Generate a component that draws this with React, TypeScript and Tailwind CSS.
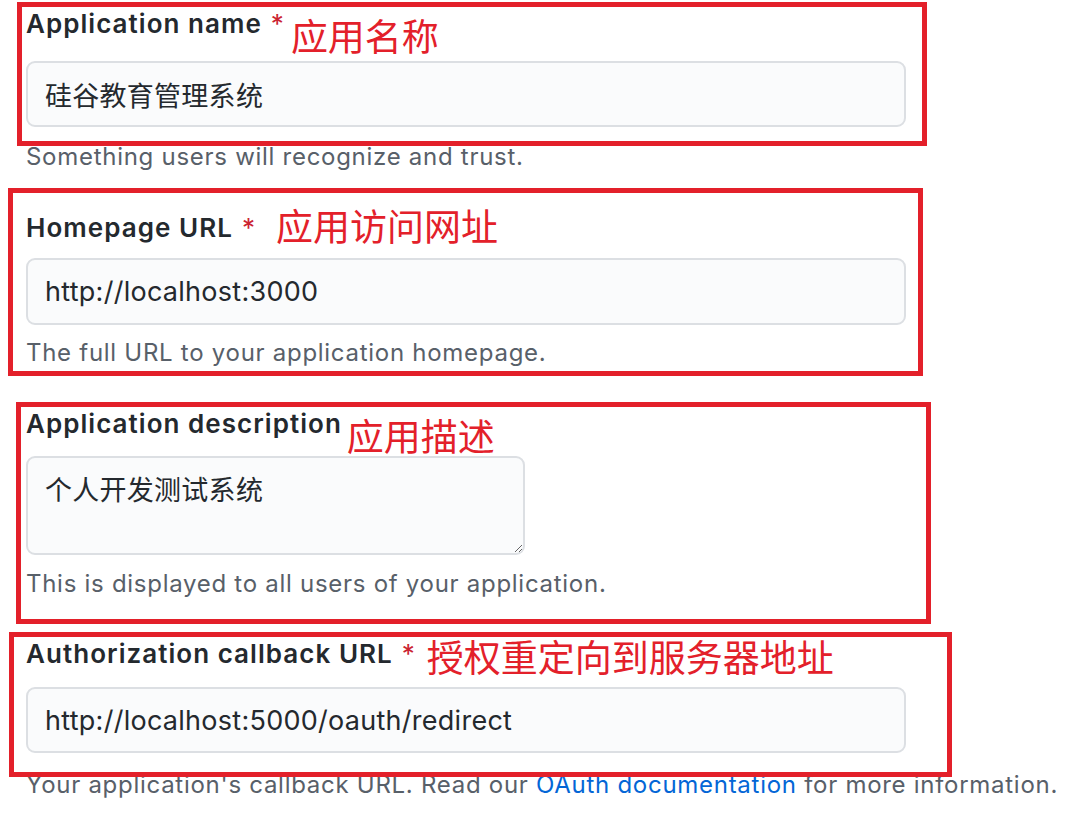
const labelCls = "text-[26px] leading-[30px] font-semibold tracking-[0.04em] whitespace-nowrap";
const noteCls = "leading-none text-[37px] text-[#e3202a] font-['Noto_Sans_CJK_SC',sans-serif] whitespace-nowrap";
const fieldCls =
  "block w-[880px] rounded-[9px] border-2 border-[#dcdfe3] bg-[#fafbfc] px-[17px] text-[27px] tracking-[0.01em] text-[#24292e] outline-none";
const helpCls = "text-[24px] leading-[30px] tracking-[0.03em] text-[#586069] whitespace-nowrap";

function Star() {
  return <span className="ml-[9px] text-[26px] leading-[30px] text-[#cb2431]">*</span>;
}

export default function App() {
  return (
    <div className="relative min-h-screen w-full bg-white font-[Inter,'Noto_Sans_CJK_SC',sans-serif] text-[#24292e]">
      <div className="flex flex-col pl-[26px] pt-[9px]">
        {/* Application name */}
        <div className="flex h-[30px] items-start">
          <label className={labelCls}>Application name</label>
          <Star />
          <span className={`${noteCls} ml-[7px] mt-[8px]`}>应用名称</span>
        </div>
        <input readOnly value="硅谷教育管理系统" className={`${fieldCls} mt-[22px] h-[66px]`} />
        <p className={`${helpCls} mt-[15px]`}>Something users will recognize and trust.</p>

        {/* Homepage URL */}
        <div className="mt-[41px] flex h-[30px] items-start">
          <label className={labelCls}>Homepage URL</label>
          <Star />
          <span className={`${noteCls} ml-[21px] -mt-[6px]`}>应用访问网址</span>
        </div>
        <input readOnly value="http://localhost:3000" className={`${fieldCls} mt-[15px] h-[67px]`} />
        <p className={`${helpCls} mt-[13px]`}>The full URL to your application homepage.</p>

        {/* Application description */}
        <div className="mt-[41px] flex h-[30px] items-start">
          <label className={labelCls}>Application description</label>
          <span className={`${noteCls} ml-[5px] mt-[8px]`}>应用描述</span>
        </div>
        <textarea
          readOnly
          value="个人开发测试系统"
          className="mt-[17px] block h-[99px] w-[499px] resize rounded-[9px] border-2 border-[#dcdfe3] bg-[#fafbfc] px-[17px] pt-[14px] text-[27px] leading-[38px] tracking-[0.01em] text-[#24292e] outline-none"
        />
        <p className={`${helpCls} mt-[14px]`}>This is displayed to all users of your application.</p>

        {/* Authorization callback URL */}
        <div className="mt-[40px] flex h-[30px] items-start">
          <label className={labelCls}>Authorization callback URL</label>
          <Star />
          <span className={`${noteCls} ml-[12px] -mt-[1px]`}>授权重定向到服务器地址</span>
        </div>
        <input readOnly value="http://localhost:5000/oauth/redirect" className={`${fieldCls} mt-[18px] h-[66px]`} />
        <p className={`${helpCls} mt-[17px]`}>
          Your application's callback URL. Read our <a className="text-[#0366d6]">OAuth documentation</a> for more information.
        </p>
      </div>

      {/* red annotation boxes drawn over the form */}
      <div className="pointer-events-none absolute left-[17px] top-[2px] h-[144px] w-[910px] border-[5px] border-[#e3202a]" />
      <div className="pointer-events-none absolute left-[8px] top-[188px] h-[188px] w-[915px] border-[5px] border-[#e3202a]" />
      <div className="pointer-events-none absolute left-[16px] top-[402px] h-[222px] w-[915px] border-[5px] border-[#e3202a]" />
      <div className="pointer-events-none absolute left-[9px] top-[632px] h-[145px] w-[943px] border-[5px] border-[#e3202a]" />
    </div>
  );
}
